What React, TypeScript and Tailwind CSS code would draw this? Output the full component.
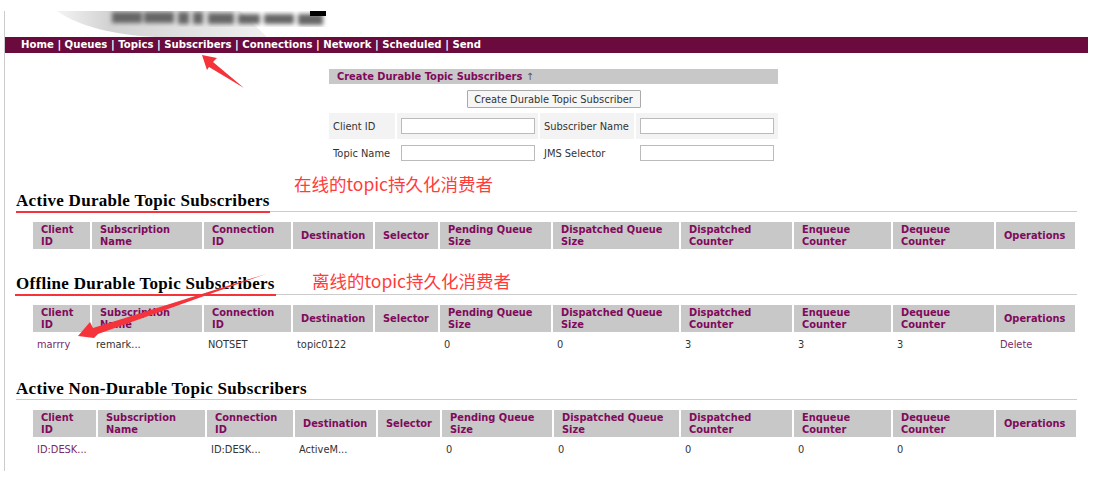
const navItems = ['Home', 'Queues', 'Topics', 'Subscribers', 'Connections', 'Network', 'Scheduled', 'Send'];

type Head = [string, string?];

const headers: Head[] = [
  ['Client', 'ID'],
  ['Subscription', 'Name'],
  ['Connection', 'ID'],
  ['Destination'],
  ['Selector'],
  ['Pending Queue', 'Size'],
  ['Dispatched Queue', 'Size'],
  ['Dispatched', 'Counter'],
  ['Enqueue', 'Counter'],
  ['Dequeue', 'Counter'],
  ['Operations'],
];

const durableCols = [57, 110, 87, 80, 63, 111, 126, 111, 97, 101, 79];
const nonDurableCols = [63, 107, 86, 81, 62, 110, 125, 111, 97, 101, 80];

function Logo() {
  return (
    <div className="h-[26px] overflow-hidden">
      <svg width="340" height="26" viewBox="0 0 340 26">
        <defs>
          <filter id="soft">
            <feGaussianBlur stdDeviation="2" />
          </filter>
          <linearGradient id="wing" x1="0" x2="1" y1="0" y2="0">
            <stop offset="0" stopColor="#f4f4f4" />
            <stop offset="0.25" stopColor="#d2d2d2" />
            <stop offset="1" stopColor="#f0f0f0" />
          </linearGradient>
        </defs>
        <path d="M52 0 H235 L262 26 H150 C110 24 75 16 52 0Z" fill="url(#wing)" />
        <g fill="#666" filter="url(#soft)">
          <rect x="107" y="1" width="30" height="11" />
          <rect x="139" y="1" width="30" height="11" />
          <rect x="173" y="1" width="11" height="12" />
          <rect x="188" y="1" width="10" height="12" />
          <rect x="203" y="2" width="26" height="11" />
          <rect x="233" y="3" width="22" height="10" />
          <rect x="259" y="3" width="30" height="10" />
          <rect x="293" y="3" width="25" height="11" />
        </g>
        <rect x="305" y="0" width="16" height="5" fill="#000" />
      </svg>
    </div>
  );
}

function Nav() {
  return (
    <nav className="h-[16px] w-[1083px] bg-[#6b0a3c] pl-[16px] text-[10.15px] leading-[15px] font-bold text-white">
      {navItems.map((item, i) => (
        <span key={item}>
          {i > 0 && ' | '}
          {item}
        </span>
      ))}
    </nav>
  );
}

function CreateForm() {
  const label = 'px-[4px] text-[#333] whitespace-nowrap';
  const input = 'block h-[16px] w-[134px] border border-[#bbb] bg-white';
  return (
    <section className="mt-[16px] ml-[324px] w-[449px] text-[9.9px] leading-[13px]">
      <h3 className="h-[15px] bg-[#c8c8c8] pl-[8px] leading-[15px] font-bold text-[#800a5c]">
        Create Durable Topic Subscribers <span className="font-normal text-[#555]">↑</span>
      </h3>
      <div className="mt-[6px] flex justify-center">
        <button className="h-[18px] w-[174px] rounded-[1px] border border-[#aaa] bg-[#f6f6f6] text-[9.9px] leading-[15px] whitespace-nowrap text-[#333]">
          Create Durable Topic Subscriber
        </button>
      </div>
      <div className="mt-[5px] grid grid-cols-[66px_141px_94px_142px] gap-[2px]">
        <div className={`flex h-[26px] items-center bg-[#f3f3f3] ${label}`}>Client ID</div>
        <div className="flex h-[26px] items-center bg-[#f3f3f3] pl-[4px]">
          <div className={input} />
        </div>
        <div className={`flex h-[26px] items-center bg-[#f3f3f3] ${label}`}>Subscriber Name</div>
        <div className="flex h-[26px] items-center bg-[#f3f3f3] pl-[4px]">
          <div className={input} />
        </div>
        <div className={`flex h-[24px] items-center ${label}`}>Topic Name</div>
        <div className="flex h-[24px] items-center pl-[4px]">
          <div className={input} />
        </div>
        <div className={`flex h-[24px] items-center ${label}`}>JMS Selector</div>
        <div className="flex h-[24px] items-center pl-[4px]">
          <div className={input} />
        </div>
      </div>
    </section>
  );
}

function Heading({ title, className }: { title: string; className: string }) {
  return (
    <h2
      className={`ml-[11px] h-[20px] w-[1061px] border-b border-[#ccc] font-['Liberation_Serif',serif] text-[17px] leading-[18px] font-bold tracking-[0.3px] text-black ${className}`}
    >
      {title}
    </h2>
  );
}

function SubscriberTable({ cols, row }: { cols: number[]; row?: { text: string; link?: boolean }[] }) {
  return (
    <table className="mt-[10px] ml-[26px] w-[1046px] table-fixed border-separate border-spacing-x-[2px] border-spacing-y-0 text-[9.85px] leading-[12px]">
      <colgroup>
        {cols.map((w, i) => (
          <col key={i} style={{ width: w }} />
        ))}
      </colgroup>
      <thead>
        <tr>
          {headers.map((h) => (
            <th key={h[0]} className="h-[27px] bg-[#c8c8c8] px-[8px] py-0 text-left align-middle font-bold text-[#800a5c]">
              {h[0]}
              {h[1] && <br />}
              {h[1]}
            </th>
          ))}
        </tr>
      </thead>
      {row && (
        <tbody>
          <tr>
            {row.map((c, i) => (
              <td key={i} className={`h-[26px] px-[4px] align-middle ${c.link ? 'text-[#7a2a66]' : 'text-[#333]'}`}>
                {c.text}
              </td>
            ))}
          </tr>
        </tbody>
      )}
    </table>
  );
}

function Annotations() {
  return (
    <>
      <span className="absolute top-[172px] left-[294px] font-['Noto_Sans_CJK_SC',sans-serif] text-[17.5px] leading-[24px] text-[#ff3b3b]">
        在线的topic持久化消费者
      </span>
      <span className="absolute top-[269px] left-[312px] font-['Noto_Sans_CJK_SC',sans-serif] text-[17.5px] leading-[24px] text-[#ff3b3b]">
        离线的topic持久化消费者
      </span>
      <svg className="pointer-events-none absolute top-0 left-0" width="1113" height="488" viewBox="0 0 1113 488">
        <path d="M16 212 H270" stroke="#f5333a" strokeWidth="2" />
        <path d="M15 295 H276" stroke="#f5333a" strokeWidth="2" />
        <path d="M202 55 L217 58 L213 62 L244 88 L209 67 L207 70Z" fill="#f5333a" />
        <path d="M78 336 L90 322 L93 328 L266 274 L98 334 L94 338Z" fill="#f5333a" />
      </svg>
    </>
  );
}

export default function App() {
  const offline = [
    { text: 'marrry', link: true },
    { text: 'remark...' },
    { text: 'NOTSET' },
    { text: 'topic0122' },
    { text: '' },
    { text: '0' },
    { text: '0' },
    { text: '3' },
    { text: '3' },
    { text: '3' },
    { text: 'Delete', link: true },
  ];
  const nonDurable = [
    { text: 'ID:DESK...', link: true },
    { text: '' },
    { text: 'ID:DESK...' },
    { text: 'ActiveM...' },
    { text: '' },
    { text: '0' },
    { text: '0' },
    { text: '0' },
    { text: '0' },
    { text: '0' },
    { text: '' },
  ];

  return (
    <div className="relative h-[488px] w-[1113px] overflow-hidden bg-white font-['DejaVu_Sans',sans-serif]">
      <main className="mt-[11px] ml-[4px] h-[460px] border-l border-[#ccc]">
        <Logo />
        <Nav />
        <CreateForm />
        <Heading title="Active Durable Topic Subscribers" className="mt-[27px]" />
        <SubscriberTable cols={durableCols} />
        <Heading title="Offline Durable Topic Subscribers" className="mt-[26px]" />
        <SubscriberTable cols={durableCols} row={offline} />
        <Heading title="Active Non-Durable Topic Subscribers" className="mt-[22px]" />
        <SubscriberTable cols={nonDurableCols} row={nonDurable} />
      </main>
      <Annotations />
    </div>
  );
}
